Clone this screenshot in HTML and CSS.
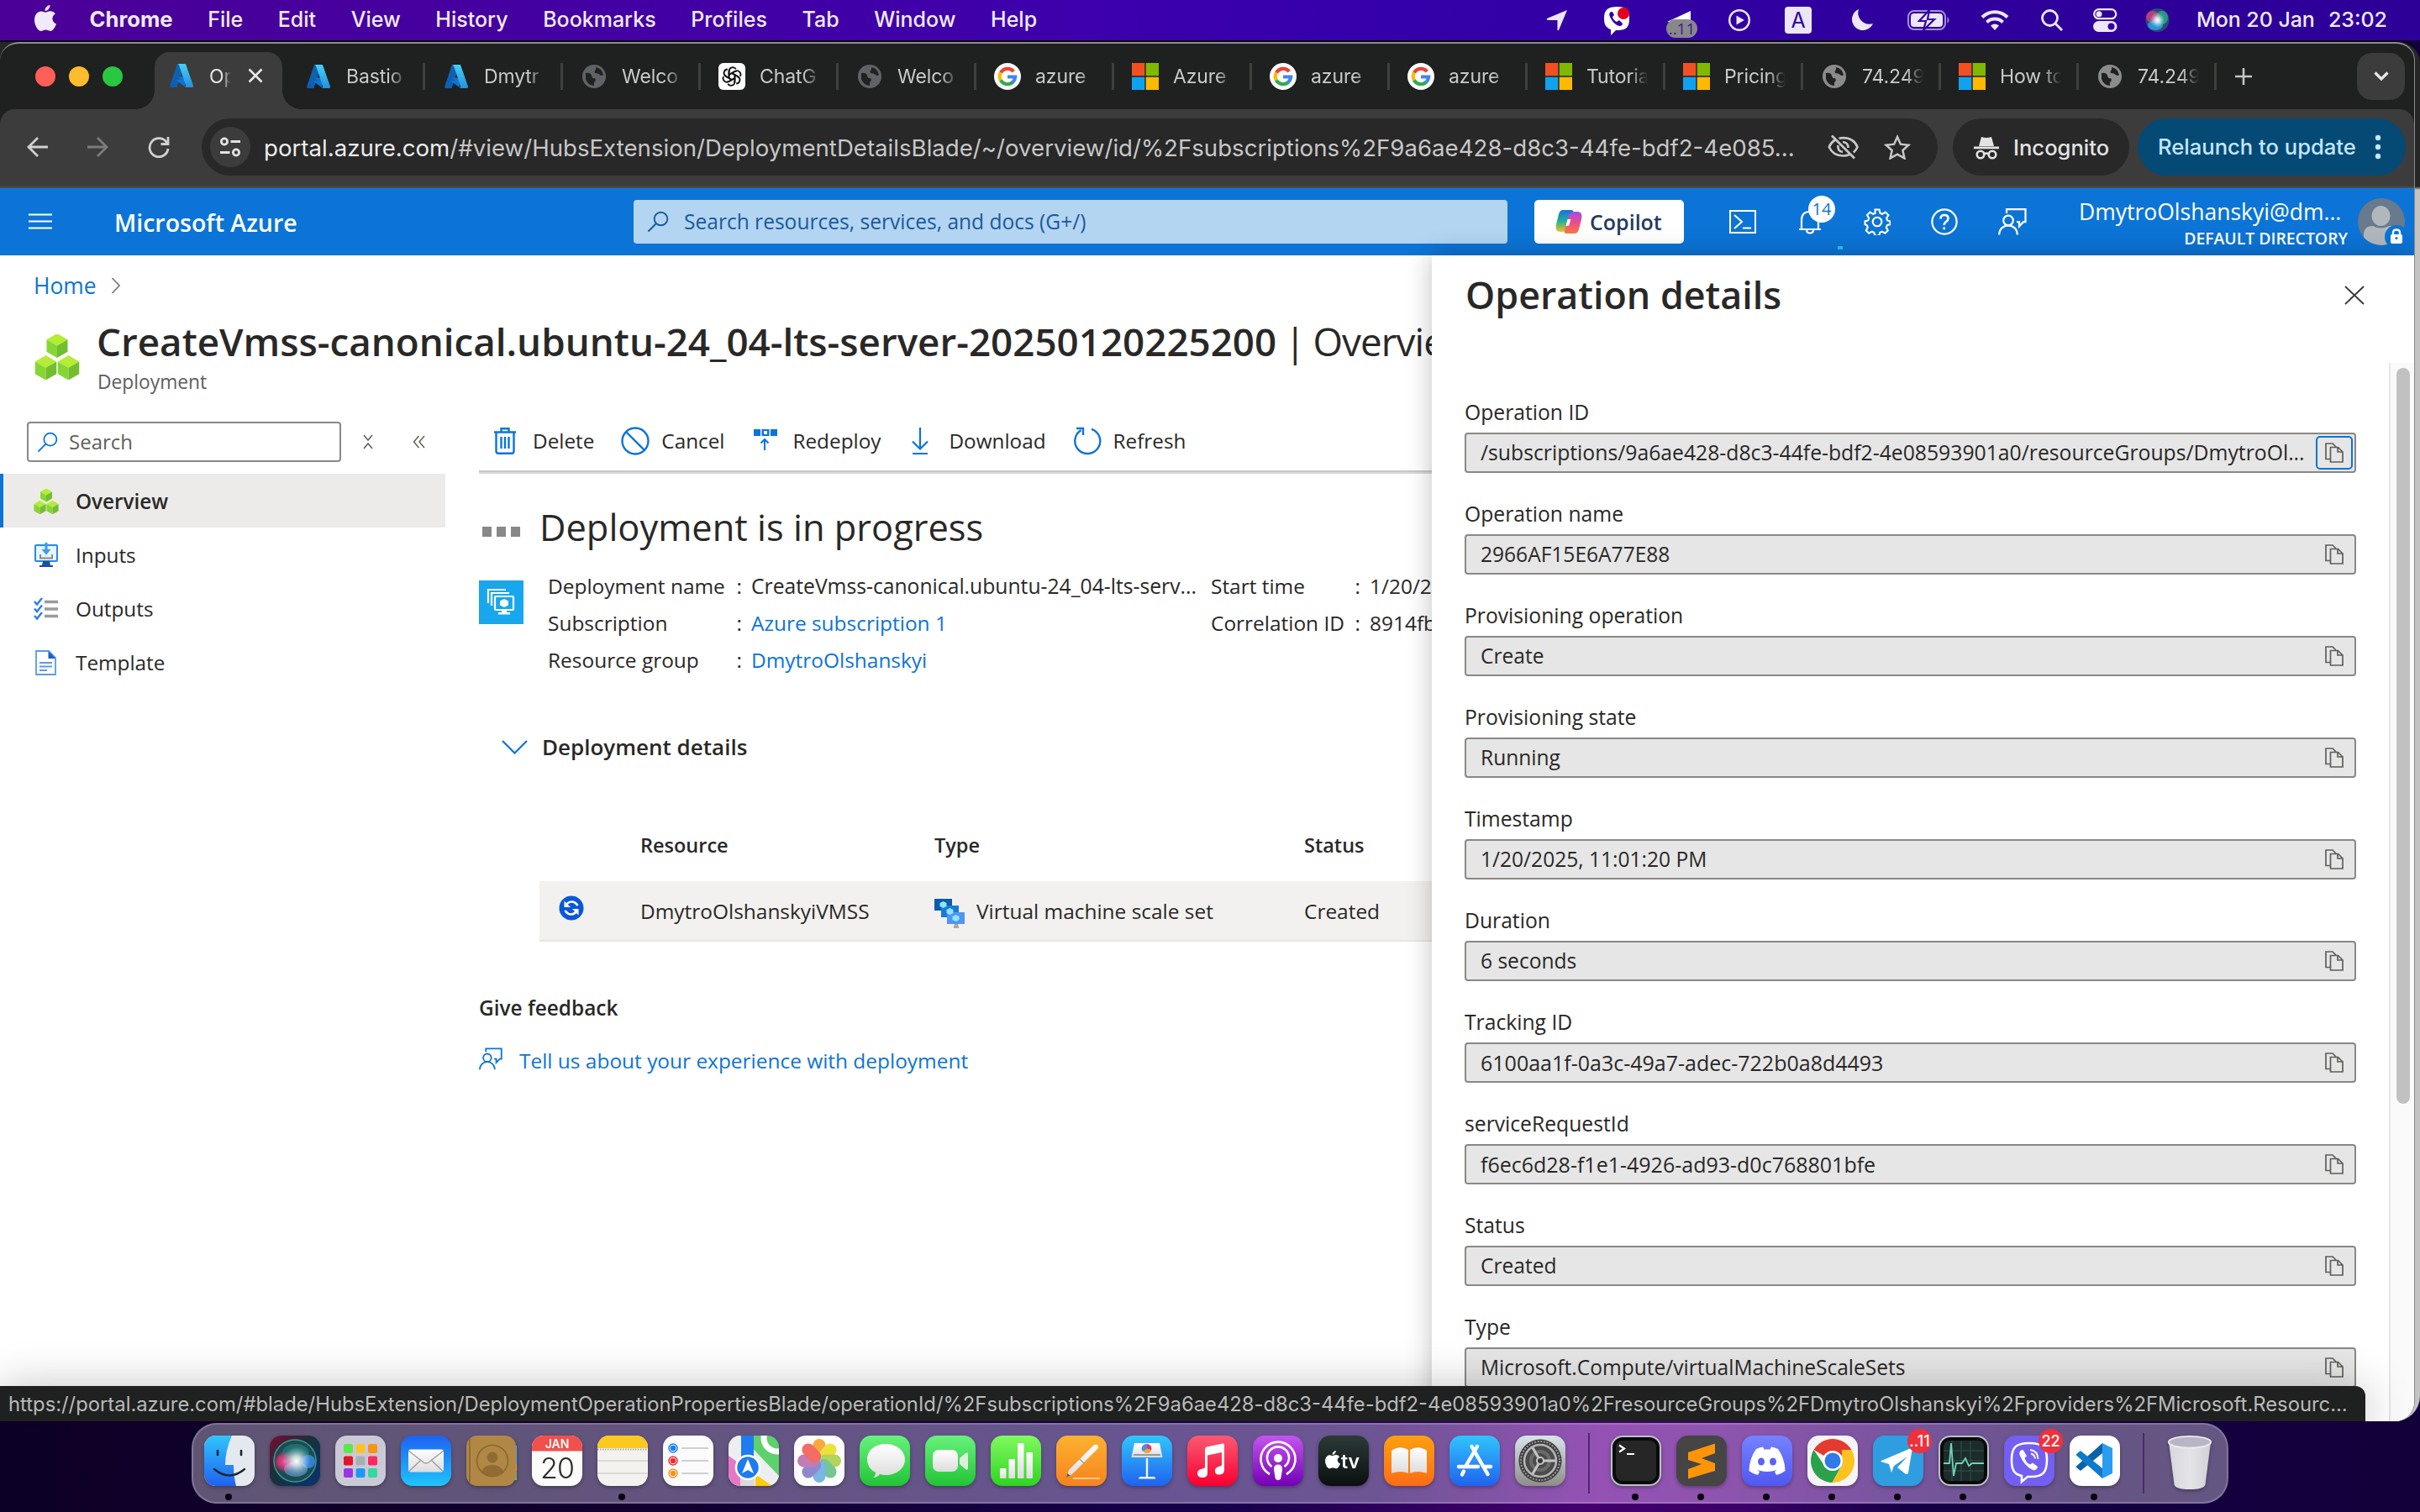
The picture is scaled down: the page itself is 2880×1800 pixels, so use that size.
FILE: index.html
```html
<!DOCTYPE html>
<html lang="en">
<head>
<meta charset="utf-8">
<title>Operation details - Microsoft Azure</title>
<link rel="stylesheet" href="styles.css">
</head>
<body>
<svg class="defs" width="0" height="0">
  <defs>
    <linearGradient id="azL" x1="0" y1="0" x2="0" y2="1"><stop offset="0" stop-color="#1460a8"/><stop offset="1" stop-color="#0a5fb8"/></linearGradient>
    <linearGradient id="azR" x1="0" y1="0" x2="0" y2="1"><stop offset="0" stop-color="#46d0f8"/><stop offset="1" stop-color="#2590df"/></linearGradient>
    <linearGradient id="gGreen" x1="0" y1="0" x2="0" y2="1"><stop offset="0" stop-color="#67f27c"/><stop offset="1" stop-color="#22c435"/></linearGradient>
    <linearGradient id="gGreen2" x1="0" y1="0" x2="0" y2="1"><stop offset="0" stop-color="#80f960"/><stop offset="1" stop-color="#2fd422"/></linearGradient>
    <linearGradient id="gBlue" x1="0" y1="0" x2="0" y2="1"><stop offset="0" stop-color="#1d62f0"/><stop offset="1" stop-color="#1fc4fc"/></linearGradient>
    <linearGradient id="gBlue2" x1="0" y1="0" x2="0" y2="1"><stop offset="0" stop-color="#30c5fd"/><stop offset="1" stop-color="#2062ee"/></linearGradient>
    <linearGradient id="gOrange" x1="0" y1="0" x2="0" y2="1"><stop offset="0" stop-color="#fdb22f"/><stop offset="1" stop-color="#f5821f"/></linearGradient>
    <linearGradient id="gBooks" x1="0" y1="0" x2="0" y2="1"><stop offset="0" stop-color="#fca00f"/><stop offset="1" stop-color="#fb6c17"/></linearGradient>
    <linearGradient id="gRed" x1="0" y1="0" x2="0" y2="1"><stop offset="0" stop-color="#fb5a74"/><stop offset="1" stop-color="#f8002f"/></linearGradient>
    <linearGradient id="gPurple" x1="0" y1="0" x2="0" y2="1"><stop offset="0" stop-color="#c455f0"/><stop offset="1" stop-color="#7400b4"/></linearGradient>
    <linearGradient id="gDisc" x1="0" y1="0" x2="0" y2="1"><stop offset="0" stop-color="#7482ff"/><stop offset="1" stop-color="#5158f0"/></linearGradient>
    <linearGradient id="gGray" x1="0" y1="0" x2="0" y2="1"><stop offset="0" stop-color="#d7e4ea"/><stop offset="1" stop-color="#8e8d88"/></linearGradient>
    <linearGradient id="gTv" x1="0" y1="0" x2="0" y2="1"><stop offset="0" stop-color="#2b3a38"/><stop offset="1" stop-color="#0b0f10"/></linearGradient>
    <linearGradient id="gPaper" x1="0" y1="0" x2="0" y2="1"><stop offset="0" stop-color="#fff"/><stop offset="1" stop-color="#dcdcdc"/></linearGradient>
    <linearGradient id="gTrash" x1="0" y1="0" x2="1" y2="0"><stop offset="0" stop-color="#d6d6dc"/><stop offset=".5" stop-color="#e4e4e8"/><stop offset="1" stop-color="#cfcfd6"/></linearGradient>
    <radialGradient id="gGlow"><stop offset="0" stop-color="#fff"/><stop offset=".35" stop-color="#fff" stop-opacity=".7"/><stop offset="1" stop-color="#9fd8ff" stop-opacity="0"/></radialGradient>
    <radialGradient id="gPink"><stop offset="0" stop-color="#f0559a"/><stop offset=".7" stop-color="#e0326e" stop-opacity=".8"/><stop offset="1" stop-color="#c02060" stop-opacity=".3"/></radialGradient>
    <linearGradient id="gSiriBg" x1="0" y1="0" x2="1" y2="1"><stop offset="0" stop-color="#7c0a32"/><stop offset=".45" stop-color="#15323a"/><stop offset="1" stop-color="#0a3270"/></linearGradient>
    <linearGradient id="gCop1" x1="0" y1="0" x2="0" y2="1"><stop offset="0" stop-color="#1a6fe0"/><stop offset=".5" stop-color="#1fb09a"/><stop offset="1" stop-color="#f4c020"/></linearGradient>
    <linearGradient id="gCop2" x1="0" y1="0" x2="0" y2="1"><stop offset="0" stop-color="#9a50e8"/><stop offset=".5" stop-color="#ef4a8c"/><stop offset="1" stop-color="#fb7a3c"/></linearGradient>
    <clipPath id="sq"><rect width="60" height="60" rx="14"/></clipPath>
    <symbol id="azure" viewBox="0 0 32 32"><path d="M11 2h9L10.500 30H3.500q-2 0-1.300-2z" fill="url(#azL)"/><path d="M11.500 17.500h13l-1 9H19z" fill="#0f74d0"/><path d="M11.500 2H20q1 0 1.300 1L30 28q.6 2-1.500 2H20q1.500-.5 1-2.500L13 3.500Q12.500 2 11.500 2z" fill="url(#azR)"/><path d="M9 21h8l4 9z" fill="#0f74d0"/></symbol>
    <symbol id="globe" viewBox="0 0 32 32"><circle cx="16" cy="16" r="14" fill="currentColor"/><path d="M6 12q6-1 7 3t4 3q2 3-1 5v4q-8-1-10-8zM18 5v3q-2 1-1 4 4 0 6 2t4 0q-2-8-9-9z" fill="#202220"/></symbol>
    <symbol id="google" viewBox="0 0 32 32"><circle cx="16" cy="16" r="16" fill="#fff"/><g fill="none" stroke-width="4.200"><path d="M23.300 10.200A9.300 9.300 0 0 0 8 11.500" stroke="#ea4335"/><path d="M8 11.400a9.300 9.300 0 0 0 0 9.200" stroke="#fbbc05"/><path d="M7.900 20.500a9.300 9.300 0 0 0 14.600 2.100" stroke="#34a853"/><path d="M22.300 22.700a9.300 9.300 0 0 0 2.900-6.200H16" stroke="#4285f4"/></g></symbol>
    <symbol id="ms" viewBox="0 0 32 32"><path d="M0 0h15.300v15.300H0z" fill="#f25022"/><path d="M16.700 0H32v15.300H16.700z" fill="#7fba00"/><path d="M0 16.700h15.300V32H0z" fill="#10a2f0"/><path d="M16.700 16.700H32V32H16.700z" fill="#ffb900"/></symbol>
    <symbol id="openai" viewBox="0 0 32 32"><rect width="32" height="32" rx="6" fill="#fff"/><g fill="none" stroke="#111" stroke-width="1.800"><g id="petal"><path d="M12.500 18V9.500a4.500 4.500 0 0 1 8.300-2.200M12.500 14l7-4a4.300 4.300 0 0 1 2 0"/></g><use href="#petal" transform="rotate(60 16 16)"/><use href="#petal" transform="rotate(120 16 16)"/><use href="#petal" transform="rotate(180 16 16)"/><use href="#petal" transform="rotate(240 16 16)"/><use href="#petal" transform="rotate(300 16 16)"/></g></symbol>
    <symbol id="cube" viewBox="0 0 20 22"><path d="M10 0l9.500 5.500L10 11 .5 5.500z" fill="#b4ec36"/><path d="M.5 5.500L10 11v11L.5 16.500z" fill="#86d633"/><path d="M19.500 5.500L10 11v11l9.500-5.500z" fill="#73be2f"/></symbol>
    <symbol id="cubes" viewBox="0 0 54 54"><use href="#cube" x="12" y="-1" width="30" height="29"/><use href="#cube" x="-1.500" y="25" width="30" height="29.500"/><use href="#cube" x="25.500" y="25" width="30" height="29.500"/></symbol>
    <symbol id="copy" viewBox="0 0 22 24"><path d="M6.500 19.500H1V1h8l4 4M6.500 5.500h9L21 11v12H6.500zM15 5.500V11h6" fill="none" stroke="#605e5c" stroke-width="1.700"/></symbol>
    <symbol id="lens" viewBox="0 0 26 26"><circle cx="16.500" cy="9.500" r="7.800" fill="none" stroke="currentColor" stroke-width="1.900"/><path d="M11 15L1.500 24.500" stroke="currentColor" stroke-width="1.900"/></symbol>
    <symbol id="feedback" viewBox="0 0 34 32"><g fill="none" stroke="currentColor" stroke-width="2.200"><path d="M10 6V1.200h22.500v15H30l-5 5.300v-5.300h-3"/><circle cx="12" cy="14.500" r="5.800"/><path d="M1.200 31.500c0-7 5-11 10.800-11s10.800 4 10.800 11"/></g></symbol>
    <symbol id="apple" viewBox="0 0 26 32"><path d="M18.500 0c.3 3.600-2.700 7-6 7C12.200 3.600 15.200.5 18.500 0zM13 8.700c1.300 0 3-1.500 5.800-1.500 2.300 0 4.600 1.200 6 3.200-5 3-4.300 9.800 1.200 12-1.200 3.500-4 8.500-7 8.500-2.200 0-3-1.300-5.600-1.300S9.700 31 7.700 31C4.200 31 0 23.800 0 18c0-6.600 4-10.500 8-10.500 2.400 0 3.900 1.200 5 1.200z" fill="currentColor"/></symbol>
  </defs>
</svg>

<header class="menubar">
  <nav class="menus">
    <svg class="apple-mark" width="26" height="32"><use href="#apple"/></svg>
    <b>Chrome</b><span>File</span><span>Edit</span><span>View</span><span>History</span><span>Bookmarks</span><span>Profiles</span><span>Tab</span><span>Window</span><span>Help</span>
  </nav>
  <div class="tray">
    <svg width="26" height="26"><path d="M25 1L15 25q-1.500 1-1.500-1V13H2q-2-.5-1-2z" fill="#ece6f7"/></svg>
    <svg width="34" height="36"><path d="M17 2c11 0 14 4 14 14s-3 14-14 14h-2l-6 6v-7C3 27 1 23 1 16 1 6 5 2 17 2z" fill="#fff"/><path d="M9 8q-3 2-1 6 4 9 11 11 4 0 4-3l-4-4-3 2q-4-2-5-6l2-2-2-4z" fill="#3300a8"/><circle cx="24" cy="10" r="7" fill="#e3001f"/></svg>
    <span class="tray-badge"><svg width="38" height="34"><path d="M2 14L30 1v14z" fill="#fff"/></svg><i>..11</i></span>
    <svg width="28" height="28"><circle cx="14" cy="14" r="11.800" fill="none" stroke="#ece6f7" stroke-width="2.400"/><path d="M10.500 8.500L20 14l-9.500 5.500z" fill="#ece6f7"/></svg>
    <span class="input-src">A</span>
    <svg width="28" height="28"><path d="M10 1a13 13 0 1 0 17 17A13.500 13.500 0 0 1 10 1z" fill="#ece6f7"/></svg>
    <svg width="52" height="26"><rect x="1" y="2" width="44" height="22" rx="7" fill="none" stroke="#a48dd8" stroke-width="2"/><path d="M47.500 9q4 4 0 8z" fill="#a48dd8"/><rect x="4" y="5" width="38" height="16" rx="4" fill="#ece6f7"/><path d="M26 1L14 14h8l-3 11 13-13h-8z" fill="#ece6f7" stroke="#3300a8" stroke-width="2.200"/></svg>
    <svg width="34" height="26" fill="none" stroke="#ece6f7" stroke-width="4"><path d="M2 9.500a21 21 0 0 1 30 0M7.500 15.500a13.500 13.500 0 0 1 19 0"/><path d="M17 25l-5-5.500q5-4 10 0z" fill="#ece6f7" stroke="none"/></svg>
    <svg width="28" height="28" fill="none" stroke="#ece6f7" stroke-width="2.800"><circle cx="11.500" cy="11.500" r="9"/><path d="M18 18l8 8"/></svg>
    <svg width="30" height="28"><rect x="1.200" y="1.200" width="26" height="11" rx="5.500" fill="none" stroke="#ece6f7" stroke-width="2.300"/><circle cx="7" cy="6.700" r="3.500" fill="#ece6f7"/><rect y="15" width="28.500" height="13" rx="6.500" fill="#ece6f7"/><circle cx="21.500" cy="21.500" r="4" fill="#3300a8"/></svg>
    <svg width="30" height="28"><circle cx="14.500" cy="14" r="14" fill="#2a4a78"/><ellipse cx="9" cy="10" rx="8" ry="7" fill="#d8407c" opacity=".8"/><ellipse cx="12" cy="20" rx="9" ry="6" fill="#2aa7e8" opacity=".8"/><ellipse cx="20" cy="11" rx="7" ry="8" fill="#28b98c" opacity=".7"/><circle cx="14.500" cy="14" r="9" fill="url(#gGlow)"/></svg>
    <span class="clock">Mon 20 Jan</span><span class="clock">23:02</span>
  </div>
</header>

<div class="window-edge"></div>
<main class="window">
  <div class="tabstrip">
    <div class="lights"><i class="red"></i><i class="yellow"></i><i class="green"></i></div>
    <div class="tab active"><svg class="fav"><use href="#azure"/></svg><span class="tab-title">Op</span><svg class="close" width="18" height="18"><path d="M1.500 1.500l15 15m0-15l-15 15" stroke="#e8e8e8" stroke-width="2.600"/></svg></div>
    <div class="tab"><svg class="fav"><use href="#azure"/></svg><span class="tab-title">Bastio</span></div>
    <div class="tab"><svg class="fav"><use href="#azure"/></svg><span class="tab-title">Dmytr</span></div>
    <div class="tab"><svg class="fav dim"><use href="#globe"/></svg><span class="tab-title">Welco</span></div>
    <div class="tab"><svg class="fav"><use href="#openai"/></svg><span class="tab-title">ChatG</span></div>
    <div class="tab"><svg class="fav dim"><use href="#globe"/></svg><span class="tab-title">Welco</span></div>
    <div class="tab"><svg class="fav"><use href="#google"/></svg><span class="tab-title">azure</span></div>
    <div class="tab"><svg class="fav"><use href="#ms"/></svg><span class="tab-title">Azure</span></div>
    <div class="tab"><svg class="fav"><use href="#google"/></svg><span class="tab-title">azure</span></div>
    <div class="tab"><svg class="fav"><use href="#google"/></svg><span class="tab-title">azure</span></div>
    <div class="tab"><svg class="fav"><use href="#ms"/></svg><span class="tab-title">Tutoria</span></div>
    <div class="tab"><svg class="fav"><use href="#ms"/></svg><span class="tab-title">Pricing</span></div>
    <div class="tab"><svg class="fav globe"><use href="#globe"/></svg><span class="tab-title">74.249</span></div>
    <div class="tab"><svg class="fav"><use href="#ms"/></svg><span class="tab-title">How to</span></div>
    <div class="tab"><svg class="fav globe"><use href="#globe"/></svg><span class="tab-title">74.249</span></div>
    <svg class="plus" width="22" height="22"><path d="M11 1v20M1 11h20" stroke="#c4c6c4" stroke-width="2.600"/></svg>
    <div class="tab-menu"><svg width="18" height="12"><path d="M1.500 1.500L9 9l7.500-7.500" fill="none" stroke="#e8e8e8" stroke-width="3.200"/></svg></div>
  </div>

  <div class="toolbar">
    <svg width="26" height="26" fill="none" stroke="#d0d0d0" stroke-width="2.800"><path d="M25 13H2M13 2L2 13l11 11"/></svg>
    <svg width="26" height="26" fill="none" stroke="#7c7c7c" stroke-width="2.800"><path d="M1 13h23M13 2l11 11-11 11"/></svg>
    <svg width="26" height="26" fill="none" stroke="#d0d0d0" stroke-width="2.800"><path d="M22.500 8A11 11 0 1 0 24 15M24 1v8.500h-8.500"/></svg>
    <div class="omnibox">
      <span class="site"><svg width="26" height="24" fill="none" stroke="#e3e3e3" stroke-width="2.800"><circle cx="6" cy="5.500" r="3.600"/><path d="M13.500 5.500H25M1 18.500h11.500"/><circle cx="20" cy="18.500" r="3.600"/></svg></span>
      <span class="url"><b>portal.azure.com</b>/#view/HubsExtension/DeploymentDetailsBlade/~/overview/id/%2Fsubscriptions%2F9a6ae428-d8c3-44fe-bdf2-4e085...</span>
      <svg class="eye" width="38" height="30" fill="none" stroke="#c8c8c8" stroke-width="2.700"><path d="M9 6.500Q4 9.500 1.800 15 6.500 25.500 18.500 25.500q4 0 7.500-1.600M13.500 4.800q2.300-.6 5-.6Q31 4.200 35.500 15q-1.600 3.800-4.700 6.500M12.500 13q-1 7 5.500 8M18 9q6.500.5 6.500 7M5 1.500L32 28.500"/></svg>
      <svg width="32" height="30"><path d="M16 3l3.900 8.700 9.500 1-7 6.300 2 9.400-8.400-4.800-8.400 4.800 2-9.400-7-6.300 9.500-1z" fill="none" stroke="#c8c8c8" stroke-width="2.500"/></svg>
    </div>
    <div class="incognito"><svg width="30" height="28"><path d="M9 1q6 2 12 0l3 11H6zM0 12.500h30v2.800H0z" fill="#e3e3e3"/><g fill="none" stroke="#e3e3e3" stroke-width="2.600"><circle cx="8" cy="22" r="4.300"/><circle cx="22" cy="22" r="4.300"/><path d="M12 21.500q3-2 6 0"/></g></svg>Incognito</div>
    <div class="relaunch">Relaunch to update<svg width="8" height="30" fill="#c2e7ff"><circle cx="4" cy="4" r="3.200"/><circle cx="4" cy="15" r="3.200"/><circle cx="4" cy="26" r="3.200"/></svg></div>
  </div>

  <div class="azure-bar">
    <svg class="burger" width="28" height="20"><path d="M0 1.500h28M0 9.500h28M0 17.500h28" stroke="#fff" stroke-width="2.200"/></svg>
    <span class="brand">Microsoft Azure</span>
    <div class="global-search"><svg width="26" height="26"><use href="#lens"/></svg>Search resources, services, and docs (G+/)</div>
    <div class="copilot"><svg width="32" height="30"><path d="M9 1h10q3 0 2.200 3L17 20q-2 7-8 7H6q-7 0-5-9L4 6q1.500-5 5-5z" fill="url(#gCop1)"/><path d="M23 29H13q-3 0-2-3l4-16q2-7 8-7h3q7 0 5 9l-3 12q-1.500 5-5 5z" fill="url(#gCop2)"/><path d="M14.500 12h4l-2.500 8h-3.500z" fill="#fff"/></svg>Copilot</div>
    <svg width="32" height="28" fill="none" stroke="#fff" stroke-width="2"><path d="M1 1h30v26H1zM6 6l9 8-9 8M16 21.500h10"/></svg>
    <span class="bell"><svg width="28" height="30" fill="none" stroke="#fff" stroke-width="2.200"><path d="M1 24h26M4 24V13Q4 3 14 3t10 10v11M10 24.500q0 4 4 4t4-4"/></svg><i>14</i></span>
    <svg width="32" height="32" fill="none" stroke="#fff" stroke-width="2.100"><circle cx="16" cy="16" r="5.300"/><path d="M13.500 1.500h5l1 4.200 2.600 1.100 3.700-2.300 3.600 3.600-2.300 3.700 1 2.600 3.400 1v3.600l-3.700 1.200-1 2.600 2 3.500-3.400 3.400-3.500-2-2.600 1-1 3.800h-5l-1-3.800-2.600-1-3.500 2-3.400-3.400 2-3.500-1-2.600L1.500 19v-3.600l3.600-1 1.100-2.600-2.200-3.700 3.500-3.600 3.600 2.300 2.500-1.100z"/></svg>
    <svg width="32" height="32" fill="none" stroke="#fff" stroke-width="2.200"><circle cx="16" cy="16" r="14.600"/><path d="M11.500 12.500q0-4.500 4.500-4.500t4.500 4q0 2.300-2.500 4t-2.200 4M15.700 22.500v2.800" stroke-width="2.600"/></svg>
    <svg width="34" height="32" color="#fff"><use href="#feedback"/></svg>
    <div class="account"><span>DmytroOlshanskyi@dm...</span><b>DEFAULT DIRECTORY</b></div>
    <svg class="avatar" width="58" height="56"><defs><clipPath id="av"><circle cx="28" cy="28" r="28"/></clipPath></defs><g clip-path="url(#av)"><path d="M0 0h56v56H0z" fill="#697a8c"/><ellipse cx="27.500" cy="21" rx="11" ry="12" fill="#b1b8bd"/><path d="M7 56V44q0-11 11-11 9 5 19 0 11 0 11 11v12z" fill="#b1b8bd"/></g><circle cx="46" cy="46" r="14" fill="#0c74d6"/><rect x="39" y="43" width="14" height="11" rx="2" fill="#fff"/><path d="M42 44v-3q0-3.500 4-3.500t4 3.500v3" fill="none" stroke="#fff" stroke-width="2.400"/><circle cx="46" cy="47.500" r="1.500" fill="#0c74d6"/></svg>
  </div>

  <div class="portal">
    <section class="blade">
      <div class="crumbs"><a>Home</a><svg width="12" height="20"><path d="M1.500 1L10 10l-8.500 9" fill="none" stroke="#7a7876" stroke-width="1.700"/></svg></div>
      <div class="blade-head">
        <svg width="54" height="54"><use href="#cubes"/></svg>
        <div><h1><b>CreateVmss-canonical.ubuntu-24_04-lts-server-20250120225200</b> | Overview</h1><p>Deployment</p></div>
      </div>
      <div class="columns">
        <aside class="sidebar">
          <div class="side-tools">
            <div class="side-search"><svg width="25" height="25" color="#0c74d6"><use href="#lens"/></svg>Search</div>
            <svg width="12" height="18" fill="none" stroke="#605e5c" stroke-width="1.500"><path d="M1 1l5 6 5-6M1 17l5-6 5 6"/></svg>
            <svg width="15" height="16" fill="none" stroke="#605e5c" stroke-width="1.500"><path d="M7.500 1l-6 7 6 7M14 1L8 8l6 7"/></svg>
          </div>
          <a class="item selected"><svg width="30" height="30"><use href="#cubes"/></svg>Overview</a>
          <a class="item"><svg width="30" height="30"><rect x="2" y="3" width="26" height="19" rx="1" fill="#e8f4fe" stroke="#2b8ae2" stroke-width="2"/><path d="M11 22h8l1 5h3v2H7v-2h3z" fill="#1b4fa0"/><path d="M13.500 0h3v8h4L15 14.500 9.500 8h4z" fill="#3b9bf0"/><path d="M8 14v4.500h14V14" fill="none" stroke="#8a8886" stroke-width="2"/></svg>Inputs</a>
          <a class="item"><svg width="30" height="30" fill="none"><path d="M13 6.500h16M13 15h16M13 23.500h16" stroke="#9b9b9b" stroke-width="3.400"/><path d="M1 6l3 3.500L10 2M1 14.500L4 18l6-7.500M1 23l3 3.500L10 19" stroke="#2f7fe0" stroke-width="2.400"/></svg>Outputs</a>
          <a class="item"><svg width="30" height="30"><path d="M3 1h15l8 8v20H3z" fill="#fff" stroke="#5b9bea" stroke-width="1.800"/><path d="M17.500 1v9H26z" fill="#1e5fc0"/><path d="M7 15h15M7 19.500h15M7 24h9" stroke="#5b9bea" stroke-width="2"/></svg>Template</a>
        </aside>
        <div class="content">
          <div class="commands">
            <a><svg width="28" height="32" fill="none" stroke="#0c74d6" stroke-width="2.400"><path d="M1 5.500h26M3.500 6v22q0 2.800 2.500 2.800h16q2.500 0 2.500-2.800V6M9.500 5V1.200h9V5M9.500 11v14M14 11v14M18.500 11v14"/></svg>Delete</a>
            <a><svg width="34" height="34" fill="none" stroke="#0c74d6" stroke-width="2.400"><circle cx="17" cy="17" r="15.500"/><path d="M6 6l22 22"/></svg>Cancel</a>
            <a><svg width="28" height="32"><path d="M0 2h28v8H0z" fill="#0c74d6"/><path d="M8.800 2v8M19.200 2v8" stroke="#fff" stroke-width="1.400"/><path d="M12 4h4v4h-4z" fill="#fff"/><path d="M13 27V15M8.500 18.500L13 14l4.500 4.500" fill="none" stroke="#0c74d6" stroke-width="2"/></svg>Redeploy</a>
            <a><svg width="20" height="32" fill="none" stroke="#0c74d6" stroke-width="2.200"><path d="M10 0v25M1 16.500l9 9 9-9M1 31h18"/></svg>Download</a>
            <a><svg width="34" height="34" fill="none" stroke="#0c74d6" stroke-width="2.400"><path d="M22 2.800A15 15 0 1 1 9.500 4.200M4 2h8v8"/></svg>Refresh</a>
          </div>
          <h2><span class="busy"><i></i><i></i><i></i></span>Deployment is in progress</h2>
          <div class="essentials">
            <svg class="tile" width="53" height="52"><path d="M0 0h53v52H0z" fill="#18a7ec"/><g fill="none" stroke="#fff" stroke-width="2.200"><path d="M11 27V11h21M15 30V15h21"/><rect x="19" y="19" width="22" height="16" rx="1"/></g><path d="M27 35h6v3h4v2.500H23V38h4zM30 22l5 2.500v5L30 32l-5-2.500v-5z" fill="#fff"/></svg>
            <dl>
              <dt>Deployment name</dt><dd class="full">CreateVmss-canonical.ubuntu-24_04-lts-serv...</dd>
              <dt>Subscription</dt><dd class="link">Azure subscription 1</dd>
              <dt>Resource group</dt><dd class="link">DmytroOlshanskyi</dd>
            </dl>
            <dl class="second">
              <dt>Start time</dt><dd>1/20/2025, 11:01:18 PM</dd>
              <dt>Correlation ID</dt><dd>8914fb</dd>
            </dl>
          </div>
          <h3 class="details"><svg width="31" height="17"><path d="M1 1l14.500 14.500L30 1" fill="none" stroke="#0c74d6" stroke-width="2.200"/></svg>Deployment details</h3>
          <div class="table">
            <div class="tr th"><span></span><span>Resource</span><span>Type</span><span>Status</span></div>
            <div class="tr td">
              <svg class="sync" width="30" height="30"><circle cx="15" cy="15" r="14.500" fill="#0b57d8"/><g fill="none" stroke="#fff" stroke-width="2.700"><path d="M8 13.500q2-6 7.500-6 4 0 7 4.500M22 16.500q-2 6-7.500 6-4 0-7-4.500"/></g><path d="M6.500 6.500v7.500H14zM23.500 23.500V16H16z" fill="#fff"/></svg>
              <span>DmytroOlshanskyiVMSS</span>
              <span class="type"><svg width="36" height="36"><path d="M0 1h21v14H0z" fill="#0b5cab"/><path d="M8 9h21v14H8z" fill="#1a7ad8"/><path d="M15 17h21v14H15z" fill="#4d97ee"/><path d="M10.500 4l4 2v4l-4 2-4-2V6zM18.500 12l4 2v4l-4 2-4-2v-4zM25.500 20l4 2v4l-4 2-4-2v-4z" fill="#8fe6fa"/><path d="M24 31h4l1.500 5h-7z" fill="#a8a8a8"/></svg>Virtual machine scale set</span>
              <span>Created</span>
            </div>
          </div>
          <h3 class="give">Give feedback</h3>
          <a class="tell"><svg width="28" height="27" color="#0c74d6"><use href="#feedback"/></svg>Tell us about your experience with deployment</a>
        </div>
      </div>
    </section>

    <section class="panel">
      <div class="panel-head"><h1>Operation details</h1><svg width="24" height="23"><path d="M1 1l22 21M23 1L1 22" stroke="#3b3a39" stroke-width="1.900"/></svg></div>
      <div class="panel-scroll">
        <div class="fields">
          <label>Operation ID</label><div class="field"><span class="long">/subscriptions/9a6ae428-d8c3-44fe-bdf2-4e08593901a0/resourceGroups/DmytroOl...</span><em class="focus"><svg width="22" height="24"><use href="#copy"/></svg></em></div>
          <label>Operation name</label><div class="field"><span>2966AF15E6A77E88</span><em><svg width="22" height="24"><use href="#copy"/></svg></em></div>
          <label>Provisioning operation</label><div class="field"><span>Create</span><em><svg width="22" height="24"><use href="#copy"/></svg></em></div>
          <label>Provisioning state</label><div class="field"><span>Running</span><em><svg width="22" height="24"><use href="#copy"/></svg></em></div>
          <label>Timestamp</label><div class="field"><span>1/20/2025, 11:01:20 PM</span><em><svg width="22" height="24"><use href="#copy"/></svg></em></div>
          <label>Duration</label><div class="field"><span>6 seconds</span><em><svg width="22" height="24"><use href="#copy"/></svg></em></div>
          <label>Tracking ID</label><div class="field"><span class="hex">6100aa1f-0a3c-49a7-adec-722b0a8d4493</span><em><svg width="22" height="24"><use href="#copy"/></svg></em></div>
          <label>serviceRequestId</label><div class="field"><span class="hex">f6ec6d28-f1e1-4926-ad93-d0c768801bfe</span><em><svg width="22" height="24"><use href="#copy"/></svg></em></div>
          <label>Status</label><div class="field"><span>Created</span><em><svg width="22" height="24"><use href="#copy"/></svg></em></div>
          <label>Type</label><div class="field"><span>Microsoft.Compute/virtualMachineScaleSets</span><em><svg width="22" height="24"><use href="#copy"/></svg></em></div>
        </div>
        <div class="track"><i></i></div>
      </div>
    </section>
  </div>
  <div class="status">https://portal.azure.com/#blade/HubsExtension/DeploymentOperationPropertiesBlade/operationId/%2Fsubscriptions%2F9a6ae428-d8c3-44fe-bdf2-4e08593901a0%2FresourceGroups%2FDmytroOlshanskyi%2Fproviders%2FMicrosoft.Resourc...</div>
</main>

<footer class="dock">
  <div class="app on"><svg viewBox="0 0 60 60"><g clip-path="url(#sq)"><path d="M0 0h60v60H0z" fill="#e4e9f0"/><path d="M0 0h33q-8 18-8 35h10q0 14 3 25H0z" fill="url(#gBlue2)"/></g><path d="M16 18v5M44 18v5" stroke="#1c2733" stroke-width="2.600" stroke-linecap="round"/><path d="M12 40q18 15 36 0" fill="none" stroke="#1c2733" stroke-width="2.400" stroke-linecap="round"/></svg></div>
  <div class="app"><svg viewBox="0 0 60 60"><rect width="60" height="60" rx="14" fill="url(#gSiriBg)"/><circle cx="30" cy="30" r="25" fill="#1b4a55" stroke="#3d9a8c" stroke-width="1.500"/><circle cx="18" cy="31" r="12" fill="url(#gPink)"/><ellipse cx="31" cy="20" rx="16" ry="10" fill="#2a9a86" opacity=".45"/><circle cx="46" cy="31" r="8" fill="#3a8df0" opacity=".8"/><ellipse cx="31" cy="40" rx="14" ry="9" fill="#7fb8ea" opacity=".5"/><circle cx="32" cy="30" r="17" fill="url(#gGlow)"/></svg></div>
  <div class="app"><svg viewBox="0 0 60 60"><rect width="60" height="60" rx="14" fill="#cac9d6"/><rect x="10" y="10" width="11" height="11" rx="2" fill="#5be84c"/><rect x="24.500" y="10" width="11" height="11" rx="2" fill="#fdc22a"/><rect x="39" y="10" width="11" height="11" rx="2" fill="#f7931a"/><rect x="10" y="24.500" width="11" height="11" rx="2" fill="#e0152b"/><rect x="24.500" y="24.500" width="11" height="11" rx="2" fill="#a5afb5"/><rect x="39" y="24.500" width="11" height="11" rx="2" fill="#fb2a5a"/><rect x="10" y="39" width="11" height="11" rx="2" fill="#9b35e0"/><rect x="24.500" y="39" width="11" height="11" rx="2" fill="#1a9af5"/><rect x="39" y="39" width="11" height="11" rx="2" fill="#36d6a0"/></svg></div>
  <div class="app"><svg viewBox="0 0 60 60"><rect width="60" height="60" rx="14" fill="url(#gBlue)"/><rect x="9" y="16.500" width="42" height="27" rx="3" fill="url(#gPaper)"/><path d="M9 18l18 14q3 2 6 0l18-14M10 42.500L24 29M50 42.500L36 29" fill="none" stroke="#9b9b9b" stroke-width="1.300"/></svg></div>
  <div class="app"><svg viewBox="0 0 60 60"><path d="M57 12h4v40h-4z" fill="#4ba9dc"/><path d="M57 34h4v8h-4z" fill="#f0921e"/><path d="M57 44h4v9h-4z" fill="#5cc25c"/><rect width="59" height="60" rx="13" fill="#b08745"/><g fill="none" stroke="#8a672f" stroke-width="1.600"><path d="M4 4v52"/><circle cx="31" cy="30" r="18.500"/></g><circle cx="31" cy="26" r="6.500" fill="#8f6c34"/><path d="M18 43q3-8 13-8t13 8q-5 5-13 5t-13-5z" fill="#8f6c34"/></svg></div>
  <div class="app"><svg viewBox="0 0 60 60"><g clip-path="url(#sq)"><path d="M0 0h60v60H0z" fill="#fbfbfa"/><path d="M0 0h60v18.500H0z" fill="#f2504d"/></g><text x="30" y="14.500" text-anchor="middle" class="cal-m">JAN</text><text x="30" y="51" text-anchor="middle" class="cal-d">20</text></svg></div>
  <div class="app on"><svg viewBox="0 0 60 60"><g clip-path="url(#sq)"><path d="M0 0h60v60H0z" fill="#f3f2ee"/><path d="M0 0h60v15H0z" fill="#fec91f"/><path d="M0 16.500h60" stroke="#aaa" stroke-width="2" stroke-dasharray="1.500 1.500"/><path d="M0 30h60M0 45h60" stroke="#d2d1cd" stroke-width="1.500"/></g></svg></div>
  <div class="app"><svg viewBox="0 0 60 60"><rect width="60" height="60" rx="14" fill="#fbfbfb"/><path d="M22 15h32M22 30h32M22 45h32" stroke="#c2c2c4" stroke-width="1.500"/><g stroke-width="1.500" fill="#fff"><circle cx="12" cy="15" r="5" stroke="#157efb"/><circle cx="12" cy="30" r="5" stroke="#ee2d36"/><circle cx="12" cy="45" r="5" stroke="#f39218"/></g><circle cx="12" cy="15" r="3.300" fill="#157efb"/><circle cx="12" cy="30" r="3.300" fill="#ee2d36"/><circle cx="12" cy="45" r="3.300" fill="#f39218"/></svg></div>
  <div class="app"><svg viewBox="0 0 60 60"><g clip-path="url(#sq)"><path d="M0 0h60v60H0z" fill="#5dd16b"/><path d="M0 0h14l46 48v12H0z" fill="#eeeef0"/><path d="M0 24l14 10v26H0z" fill="#e778c8"/><path d="M32 60V46l20 14z" fill="#fccb0e"/><path d="M15 0h15v60H15z" fill="#1d7cf2"/><path d="M14 45h17v15H14z" fill="#d8d8de"/><circle cx="58" cy="3" r="16" fill="none" stroke="#fff" stroke-width="7"/></g><circle cx="23" cy="38" r="14" fill="#1d7cf2" stroke="#fff" stroke-width="2.500"/><path d="M23 28l7 17-7-4-7 4z" fill="#fff"/></svg></div>
  <div class="app"><svg viewBox="0 0 60 60"><rect width="60" height="60" rx="14" fill="#fcfcfc"/><g opacity=".85"><rect x="22.500" y="4" width="15" height="26" rx="7.500" fill="#f99a20"/><rect x="22.500" y="4" width="15" height="26" rx="7.500" fill="#ebdc1a" transform="rotate(45 30 30)"/><rect x="22.500" y="4" width="15" height="26" rx="7.500" fill="#a4ce3e" transform="rotate(90 30 30)"/><rect x="22.500" y="4" width="15" height="26" rx="7.500" fill="#5ebd82" transform="rotate(135 30 30)"/><rect x="22.500" y="4" width="15" height="26" rx="7.500" fill="#64a9e0" transform="rotate(180 30 30)"/><rect x="22.500" y="4" width="15" height="26" rx="7.500" fill="#7b76c4" transform="rotate(225 30 30)"/><rect x="22.500" y="4" width="15" height="26" rx="7.500" fill="#b966a8" transform="rotate(270 30 30)"/><rect x="22.500" y="4" width="15" height="26" rx="7.500" fill="#f1554c" transform="rotate(315 30 30)"/></g></svg></div>
  <div class="app"><svg viewBox="0 0 60 60"><rect width="60" height="60" rx="14" fill="url(#gGreen)"/><path d="M31 10c13 0 23 8 23 18.500S44 47 31 47q-4 0-7-1-3 4-8 4 3-2 3-6-10-5-10-15.500C9 18 18 10 31 10z" fill="url(#gPaper)"/></svg></div>
  <div class="app"><svg viewBox="0 0 60 60"><rect width="60" height="60" rx="14" fill="url(#gGreen)"/><rect x="9" y="17" width="30" height="26" rx="7" fill="url(#gPaper)"/><path d="M41 27l7-6q3-2 3 1v17q0 3-3 1l-7-6z" fill="#dcefdc"/></svg></div>
  <div class="app"><svg viewBox="0 0 60 60"><rect width="60" height="60" rx="14" fill="url(#gGreen2)"/><g fill="url(#gPaper)"><rect x="11" y="39" width="7.500" height="12" rx="1"/><rect x="21.500" y="28" width="7.500" height="23" rx="1"/><rect x="32" y="9" width="7.500" height="42" rx="1"/><rect x="42.500" y="20" width="7.500" height="31" rx="1"/></g></svg></div>
  <div class="app"><svg viewBox="0 0 60 60"><rect width="60" height="60" rx="14" fill="url(#gOrange)"/><path d="M12 50l3-9L43 13q3-3 5.500-2t.5 5L20 45z" fill="url(#gPaper)"/><path d="M12 50l1.500-5 3 2.500z" fill="#555"/><path d="M28 28l5 5" stroke="#999" stroke-width="1.300"/><path d="M20 51h32" stroke="#fcd39b" stroke-width="1.800"/></svg></div>
  <div class="app"><svg viewBox="0 0 60 60"><rect width="60" height="60" rx="14" fill="url(#gBlue2)"/><path d="M15 9h30l3.500 17H11.500z" fill="url(#gPaper)"/><path d="M14 23h32" stroke="#8b95a0" stroke-width="1.800"/><path d="M28.800 27h2.400v22h7q2 0 2 2.500H20q0-2.500 2-2.500h6.800z" fill="#f2f2f2"/><circle cx="30" cy="15.500" r="5.500" fill="#f5a623"/><path d="M30 10v5.500L25 19a5.500 5.500 0 0 1 5-9z" fill="#4a90e2"/><path d="M30 15.500V10a5.500 5.500 0 0 1 5 7z" fill="#e0338a"/></svg></div>
  <div class="app"><svg viewBox="0 0 60 60"><rect width="60" height="60" rx="14" fill="url(#gRed)"/><path d="M21 16q0-2 2-2.500l19-4q2-.3 2 1.700V41q0 5-5.500 5.500T33 42q0-4.500 5-5.300 3-.5 3-2V20l-17 3.500V45q0 5-6 5t-6-5q0-4.500 5-5.300 4-.7 4-2.500z" fill="#fff"/></svg></div>
  <div class="app"><svg viewBox="0 0 60 60"><rect width="60" height="60" rx="14" fill="url(#gPurple)"/><g fill="none" stroke="#fff" stroke-width="2.600"><path d="M20 46a20.500 20.500 0 1 1 20 0"/><path d="M22.500 37a13 13 0 1 1 15 0"/></g><circle cx="30" cy="27" r="5" fill="#fff"/><path d="M25 40q0-5.500 5-5.500t5 5.500l-1.500 10q-.5 3-3.500 3t-3.500-3z" fill="#fff"/></svg></div>
  <div class="app"><svg viewBox="0 0 60 60"><rect width="60" height="60" rx="14" fill="url(#gTv)"/><use href="#apple" x="8" y="18" width="18" height="22" color="#fff"/><text x="27" y="39" class="tv">tv</text></svg></div>
  <div class="app"><svg viewBox="0 0 60 60"><rect width="60" height="60" rx="14" fill="url(#gBooks)"/><path d="M9 18q10-7 20-1v28q-9-4-20 0zM51 18q-10-7-20-1v28q9-4 20 0z" fill="url(#gPaper)"/></svg></div>
  <div class="app"><svg viewBox="0 0 60 60"><rect width="60" height="60" rx="14" fill="url(#gBlue2)"/><g stroke="#fff" stroke-width="4.400" stroke-linecap="round" fill="none"><path d="M26.500 13l19 33M33 13L19 37M11 37h23M41 37h8M17 42.500l-2 4"/></g></svg></div>
  <div class="app"><svg viewBox="0 0 60 60"><rect width="60" height="60" rx="14" fill="url(#gGray)"/><circle cx="30" cy="30" r="25.500" fill="#3c3c3d"/><circle cx="30" cy="30" r="23" fill="none" stroke="#9a9a9b" stroke-width="2" stroke-dasharray="2 1.600"/><circle cx="30" cy="30" r="19" fill="#4b4b4c" stroke="#b6b6b8" stroke-width="2.600"/><circle cx="30" cy="30" r="11" fill="none" stroke="#6b6b6c" stroke-width="4"/><g stroke="#c6c6c8" stroke-width="3"><path d="M30 30h18M30 30l-9-15.500M30 30l-9 15.500"/></g><circle cx="30" cy="30" r="4" fill="#3a3a3b" stroke="#c6c6c8" stroke-width="2"/></svg></div>
  <i class="divider"></i>
  <div class="app on"><svg viewBox="0 0 60 60"><rect x="1" y="1" width="58" height="58" rx="13" fill="#0a0a0a" stroke="#b9c4c4" stroke-width="2"/><rect x="6" y="6" width="48" height="48" rx="8" fill="#262626"/><path d="M10 11.500l6 4-6 4M19 22h9" fill="none" stroke="#fff" stroke-width="2.200"/></svg></div>
  <div class="app on"><svg viewBox="0 0 60 60"><rect width="60" height="60" rx="14" fill="#454545"/><path d="M14 20L46 9.500V21L30 27l16 6v9L14 51.500V40l16-6-16-5z" fill="#fe9508"/></svg></div>
  <div class="app on"><svg viewBox="0 0 60 60"><rect width="60" height="60" rx="14" fill="url(#gDisc)"/><path d="M17 16q5-2.500 8-2.500l1.500 3h7l1.500-3q3 0 8 2.500 8 11 8.500 26-5 4-10.500 5l-2-4 2.500-2q-11.500 4-23 0l2.500 2-2 4q-5.500-1-10.500-5Q9 27 17 16z" fill="#fff"/><ellipse cx="23" cy="31" rx="4" ry="4.500" fill="#5a63f5"/><ellipse cx="37" cy="31" rx="4" ry="4.500" fill="#5a63f5"/></svg></div>
  <div class="app on"><svg viewBox="0 0 60 60"><rect width="60" height="60" rx="14" fill="#f6f4f8"/><path d="M30 30L7.500 17a26 26 0 0 1 45 0z" fill="#e33b2e"/><path d="M7.500 17a26 26 0 0 0 22 39l11-20L19 34z" fill="#2ba14b"/><path d="M52.500 17a26 26 0 0 1-23 39l11.500-20V17z" fill="#fcc31e"/><circle cx="30" cy="30" r="12" fill="#fff"/><circle cx="30" cy="30" r="9.500" fill="#2f7bea"/></svg></div>
  <div class="app on"><svg viewBox="0 0 60 60"><rect width="60" height="60" rx="14" fill="#2e9ee0"/><path d="M10 30L44 15.500q3-1 2.500 2L42 44q-.7 3-3.500 1.500L29 38l12-13-16 11-3 8-3-10-8-2.500q-3-.8-1-1.500z" fill="#fff"/></svg><b>..11</b></div>
  <div class="app on"><svg viewBox="0 0 60 60"><rect x="1" y="1" width="58" height="58" rx="13" fill="#0a0a0a" stroke="#b9c4c4" stroke-width="2"/><rect x="6" y="6" width="48" height="48" rx="7" fill="#1c2c2a"/><path d="M16 6v48M27 6v48M38 6v48M6 18h48M6 30h48M6 42h48" stroke="#33504b" stroke-width="1"/><path d="M6 33h7l2-24 3 39 3-15h7l4-6 4 9 4-3h14" fill="none" stroke="#6fd3b9" stroke-width="1.800"/></svg></div>
  <div class="app on"><svg viewBox="0 0 60 60"><rect width="60" height="60" rx="14" fill="#7360f2"/><path d="M30 9c16 0 21 5 21 20s-5 20-19 20h-4l-7 6v-7C12 46 9 41 9 29 9 14 14 9 30 9z" fill="none" stroke="#fff" stroke-width="2.600"/><path d="M21 17q-4 2-2 7 5 12 15 17 5 1 6-4l-6-4.500-3 2q-5-2-6.500-8l2.500-2-4-7z" fill="#fff"/><path d="M31 17q9 1 9.500 11M32 21.500q4.500 1 5 6" fill="none" stroke="#fff" stroke-width="1.800"/></svg><b>22</b></div>
  <div class="app on"><svg viewBox="0 0 60 60"><rect width="60" height="60" rx="14" fill="#fefefe"/><path d="M39 9l12 6v30l-12 6z" fill="#2a9cf0"/><path d="M39 9v12L13 42l-5-4V36.500z" fill="#0a63a9"/><path d="M39 51V39L13 18l-5 4v1.500z" fill="#0d7bcd"/></svg></div>
  <i class="divider"></i>
  <div class="app trash"><svg viewBox="0 0 56 68"><path d="M2 6h52l-7 54q-1 6-19 6T9 60z" fill="url(#gTrash)"/><ellipse cx="28" cy="8" rx="26" ry="7" fill="#b9b5c4" stroke="#ececf0" stroke-width="1.800"/></svg></div>
</footer>
</body>
</html>
```
FILE: styles.css
```css
* { box-sizing: border-box; }
html, body { margin: 0; }
body {
  position: relative;
  width: 2880px;
  height: 1800px;
  overflow: hidden;
  font: 24.55px/44px "Open Sans", "Noto Sans", sans-serif;
  color: #292827;
  background: linear-gradient(90deg, #0d0026, #12002e 25%, #17004a 50%, #45006e 65%, #3c0069 72%, #160045 79%, #12003a);
}
svg { display: block; flex: none; }
i, em { font-style: normal; }
h1, h2, h3, p, dl, dd { margin: 0; }
.defs { position: absolute; }

/* macOS menu bar */
.menubar {
  display: flex;
  justify-content: space-between;
  height: 48px;
  background: linear-gradient(90deg, #4b0097, #3d00ac 45%, #3500ab 55%, #2f009c 80%, #2d0098);
  color: #f0eafa;
  font: 500 25px/46px Inter, sans-serif;
}
.menus { display: flex; gap: 41.6px; padding-left: 41px; }
.menus b { font-weight: 700; font-size: 25.6px; }
.apple-mark { margin: 6px -2px 0 0; }
.tray {
  display: grid;
  grid-template-columns: 68px 74px 74px 68px 78px 68px 87px 71px 63px 62px 61px 157px auto;
  align-items: center;
  width: 1040px;
  height: 48px;
}
.clock { white-space: nowrap; margin-top: -2px; font-size: 24.9px; }
.input-src {
  width: 32px; height: 32px;
  border-radius: 4px;
  background: #ece6f7;
  color: #3300a8;
  font-weight: 400;
  line-height: 32px;
  text-align: center;
}
.tray-badge { position: relative; height: 34px; margin-top: 10px; }
.tray-badge i {
  position: absolute; left: 1px; top: 11px;
  width: 37px; height: 22px;
  border-radius: 11px;
  background: #8a8789;
  color: #3a1aa0;
  font: 19px/22px "Open Sans", sans-serif;
  text-align: center;
}

/* Chrome window */
.window-edge {
  position: absolute; left: 0; top: 48px;
  width: 2880px; height: 1644px;
  border-top: 2px solid #0a0014;
  border-radius: 0 26px 30px 0;
  background: linear-gradient(#262626 172px, #c3c3c3 176px);
}
.window {
  position: absolute; left: 0; top: 50px;
  display: flex;
  flex-direction: column;
  width: 2874px; height: 1642px;
  border-top: 2px solid #8d8d8d;
  border-right: 1px solid #8a8a8a;
  border-radius: 22px 22px 24px 0;
  overflow: hidden;
  background: #1f2120;
}
.tabstrip {
  display: flex;
  align-items: center;
  height: 78px;
  padding-left: 42px;
  color: #c8cac8;
  font: 23px/30px Inter, sans-serif;
  letter-spacing: -0.1px;
}
.lights { display: flex; gap: 16px; width: 142px; }
.lights i { width: 24px; height: 24px; border-radius: 50%; }
.red { background: #ff5f57; }
.yellow { background: #febc2e; }
.green { background: #28c840; }
.tab {
  display: flex;
  align-items: center;
  flex: none;
  width: 164px; height: 32px;
  padding: 0 0 1px 21px;
  border-right: 3px solid #3e403e;
}
.tab:nth-child(2) {
  position: relative;
  align-self: flex-end;
  width: 152px; height: 68px;
  margin-right: 6px;
  padding: 0 0 12px 16px;
  border: 0;
  border-radius: 18px 18px 0 0;
  background: #3c3c3c;
}
.tab.active::before, .tab.active::after {
  content: "";
  position: absolute; bottom: 0;
  width: 22px; height: 22px;
}
.tab.active::before { left: -22px; background: radial-gradient(circle at 0 0, transparent 21.5px, #3c3c3c 22px); }
.tab.active::after { right: -22px; background: radial-gradient(circle at 100% 0, transparent 21.5px, #3c3c3c 22px); }
.fav { width: 32px; height: 32px; }
.fav.dim { color: #5f6267; }
.fav.globe { color: #8b8b8b; }
.tab-title {
  width: 84px;
  margin: 1px 0 0 17px;
  white-space: nowrap;
  -webkit-mask-image: linear-gradient(90deg, #000 52px, transparent 73px);
  mask-image: linear-gradient(90deg, #000 52px, transparent 73px);
}
.active .tab-title {
  width: 34px;
  color: #e6e6e6;
  -webkit-mask-image: linear-gradient(90deg, #000 15px, transparent 26px);
  mask-image: linear-gradient(90deg, #000 15px, transparent 26px);
}
.close { margin-left: 12px; }
.plus { margin-left: 21px; }
.tab-menu {
  display: grid;
  place-items: center;
  width: 57px; height: 56px;
  margin: 0 11px 0 auto;
  border-radius: 18px;
  background: #3c3c3c;
}
.toolbar {
  display: grid;
  grid-template-columns: 71px 73px 64px 2084px 220px 319px;
  align-items: center;
  height: 94px;
  padding: 0 0 2px 32px;
  border-bottom: 2px solid #4a4a4a;
  border-radius: 18px 18px 0 0;
  background: #3c3c3c;
  font: 500 25.6px/68px Inter, sans-serif;
}
.omnibox {
  display: flex;
  align-items: center;
  width: 2066px; height: 68px;
  padding: 0 32px 0 10px;
  border-radius: 34px;
  background: #282828;
  color: #c7c7c7;
  font-weight: 400;
  font-size: 27.64px;
}
.omnibox b { font-weight: 400; color: #ededed; }
.site {
  display: grid;
  place-items: center;
  width: 48px; height: 48px;
  margin-right: 16px;
  border-radius: 50%;
  background: #3c3c3c;
}
.url { flex: 1; white-space: nowrap; padding-top: 1px; }
.eye { margin-right: 29px; }
.incognito, .relaunch {
  display: flex;
  align-items: center;
  height: 68px;
  padding-top: 1px;
  border-radius: 34px;
}
.incognito { gap: 17px; width: 210px; padding-left: 25px; background: #282828; color: #e3e3e3; }
.relaunch { justify-content: space-between; padding: 0 29px 0 24px; background: #044a75; color: #c2e7ff; }

/* Azure top bar */
.azure-bar {
  display: grid;
  grid-template-columns: 136px 618px 1072px 232px 82px 78px 80px 80px 96px 332px 56px;
  align-items: center;
  flex: none;
  height: 80px;
  background: #0c74d6;
  color: #fff;
}
.burger { margin-left: 34px; }
.brand { padding-top: 2px; font-weight: 600; font-size: 28.5px; }
.global-search {
  display: flex;
  align-items: center;
  gap: 18px;
  width: 1040px; height: 52px;
  padding-left: 16px;
  border-radius: 4px;
  background: #b3d5f2;
  color: #1b5a9c;
}
.copilot {
  display: flex;
  align-items: center;
  gap: 9px;
  width: 178px; height: 52px;
  padding-left: 25px;
  border-radius: 5px;
  background: #fff;
  color: #243a5e;
  font-weight: 600;
  font-size: 25px;
}
.bell { position: relative; }
.bell i {
  position: absolute; left: 12px; top: -16px;
  width: 32px; height: 32px;
  border-radius: 50%;
  background: #fff;
  color: #0c74d6;
  font-size: 20px;
  line-height: 31px;
  text-align: center;
}
.bell::after {
  content: "";
  position: absolute; left: 47px; top: 44px;
  width: 6px; height: 4px;
  background: #2cc0f5;
}
.account { display: flex; flex-direction: column; width: 320px; padding-top: 3px; }
.account span { font-size: 26.5px; line-height: 36px; }
.account b { align-self: flex-end; font-weight: 600; font-size: 19.4px; line-height: 28px; }

/* Portal */
.portal { display: flex; flex: 1; min-height: 0; background: #fff; }
.blade { width: 1705px; overflow: hidden; }
.crumbs { display: flex; align-items: center; gap: 17px; height: 72px; padding-left: 40px; font-size: 26.4px; color: #0c74d6; }
.blade-head { display: flex; align-items: center; gap: 20px; height: 98px; padding-left: 41px; }
.blade-head h1 { font-weight: 400; font-size: 45.75px; line-height: 60px; letter-spacing: -0.9px; word-spacing: -1.5px; white-space: nowrap; }
.blade-head b { font-weight: 600; letter-spacing: 0; }
.blade-head p { padding-left: 1px; font-size: 22.8px; line-height: 38px; color: #605e5c; }
.columns { display: flex; }
.sidebar { flex: none; width: 530px; padding-top: 28px; }
.side-tools { display: flex; align-items: center; height: 48px; margin: 0 24px 14px 32px; }
.side-search {
  display: flex;
  align-items: center;
  gap: 13px;
  width: 374px; height: 48px;
  margin-right: 26px;
  padding-left: 10px;
  border: 2px solid #8a8886;
  border-radius: 4px;
  font-size: 24px;
  color: #605e5c;
}
.side-search + svg { margin-right: 47px; }
.item {
  display: flex;
  align-items: center;
  gap: 20px;
  height: 64px;
  padding: 2px 0 0 40px;
  font-size: 24.3px;
}
.item.selected { padding-left: 36px; border-left: 4px solid #0c74d6; background: #ecebe9; font-weight: 600; font-size: 24.3px; }
.content { flex: none; width: 1135px; margin-left: 40px; font-size: 24.45px; }
.commands {
  display: flex;
  align-items: center;
  height: 90px;
  padding: 14px 0 0 17px;
  border-bottom: 2px solid #d8d8d8;
  box-shadow: inset 0 -2px #c8c8c8;
  font-size: 24.3px;
}
.commands a { display: flex; align-items: center; gap: 19px; margin-right: 32px; }
.commands a:nth-child(2) { gap: 14px; margin-right: 35px; }
.commands a:nth-child(3) { gap: 18px; margin-right: 37px; }
.commands a:nth-child(4) { gap: 24px; margin-right: 32px; }
.commands a:nth-child(5) { gap: 14px; }
h2 { display: flex; margin: 34px 0 18px; font-weight: 400; font-size: 43.4px; line-height: 60px; }
.busy { display: flex; gap: 6px; width: 68px; margin: 29px 0 0 4px; }
.busy i { width: 11px; height: 12px; background: #8a8886; }
.essentials { display: flex; }
.tile { margin: 15px 29px 0 0; }
.essentials dl { display: grid; grid-template-columns: 242px 547px; height: 132px; }
.essentials .second { grid-template-columns: 189px 500px; grid-auto-rows: 44px; }
.essentials dt { display: flex; justify-content: space-between; }
.essentials dt::after { content: ":"; margin-right: 11px; }
.essentials .full { font-size: 24.7px; }
.link, .tell { color: #0c74d6; }
.details, .give { font-weight: 600; font-size: 26px; }
.details { display: flex; align-items: center; gap: 17px; margin: 59px 0 0 27px; }
.table { margin: 50px 0 0 72px; }
.tr { display: grid; grid-template-columns: 120px 350px 440px auto; align-items: center; height: 72px; }
.th { height: 88px; padding-top: 2px; font-weight: 600; font-size: 23.5px; }
.td { padding-top: 2px; border-bottom: 2px solid #e8e6e4; background: #f3f1ef; }
.sync { margin: -8px 0 0 23px; }
.type { display: flex; align-items: center; gap: 14px; }
.type svg { margin-top: 3px; }
.give { margin-top: 57px; font-size: 24.4px; }
.tell { display: flex; align-items: center; gap: 20px; margin-top: 19px; }
.tell svg { margin-top: -5px; }

/* Details panel */
.panel { z-index: 1; flex: 1; display: flex; flex-direction: column; background: #fff; box-shadow: 0 0 28px rgba(0, 0, 0, .25); }
.panel-head { display: flex; align-items: center; justify-content: space-between; height: 94px; margin-bottom: 34px; padding: 0 59px 0 40px; }
.panel-head h1 { font-weight: 600; font-size: 44.8px; }
.panel-scroll { display: flex; flex: 1; min-height: 0; }
.fields { width: 1100px; padding: 38px 0 0 39px; overflow: hidden; margin-right: 39px; }
.fields label { display: block; height: 40px; margin-bottom: 5px; line-height: 42px; font-size: 24.7px; }
.field {
  display: flex;
  align-items: center;
  justify-content: space-between;
  width: 1061px; height: 48px;
  margin-bottom: 28px;
  padding: 0 2px 0 17px;
  border: 2px solid #8a8886;
  border-radius: 4px;
  background: #e6e6e6;
}
.long { font-size: 24.74px; }
.hex { font-size: 25px; }
.field em { display: grid; place-items: center; width: 44px; height: 40px; }
.focus { border: 2px solid #0c74d6; border-radius: 5px; }
.track { flex: 1; padding: 6px 5px 0 7px; border-left: 2px solid #e6e6e6; background: #fafafa; }
.track i { display: block; width: 16px; height: 876px; border-radius: 8px; background: #c1c1c1; }

/* Link target bubble */
.status {
  position: absolute; left: 0; bottom: 0;
  z-index: 2;
  width: 2815px; height: 42px;
  padding-left: 10px;
  border-radius: 0 12px 0 0;
  background: #1f2120;
  box-shadow: 0 6px 56px rgba(0, 0, 0, .3);
  color: #b9bab9;
  font: 23.8px/43px Inter, sans-serif;
  white-space: nowrap;
}

/* Dock */
.dock {
  position: absolute; left: 228px; top: 1694px;
  display: flex;
  gap: 18px;
  width: 2424px; height: 96px;
  padding: 13px 0 0 13px;
  border: 2px solid rgba(200, 185, 215, .32);
  border-radius: 30px;
  background: linear-gradient(90deg, #5f5573, #62547c 20%, #675590 45%, #6c5593 58%, #9452b4 69%, #8e54ae 75%, #75559c 85%, #665585 93%, #645682);
}
.app { position: relative; flex: none; width: 60px; height: 60px; }
.app svg { width: 60px; height: 60px; filter: drop-shadow(0 2px 2px rgba(0, 0, 0, .3)); }
.app.on::after {
  content: "";
  position: absolute; left: 25px; top: 69px;
  width: 8px; height: 8px;
  border-radius: 50%;
  background: #0a0010;
}
.app b {
  position: absolute; left: 41px; top: -8px;
  width: 29px; height: 29px;
  border-radius: 50%;
  background: #f0303a;
  color: #fff;
  font: 500 18px/29px Inter, sans-serif;
  text-align: center;
}
.divider { flex: none; width: 2px; height: 72px; margin: -3px 7px 0 9px; background: #4a2a70; }
.trash, .trash svg { width: 56px; height: 66px; }
.trash { margin-left: 1px; }
.cal-m { font: 600 14px Inter, sans-serif; fill: #fff; }
.cal-d { font: 300 34px Inter, sans-serif; fill: #2b2b2b; letter-spacing: -1px; }
.tv { font: 600 23px Inter, sans-serif; fill: #fff; }
```
